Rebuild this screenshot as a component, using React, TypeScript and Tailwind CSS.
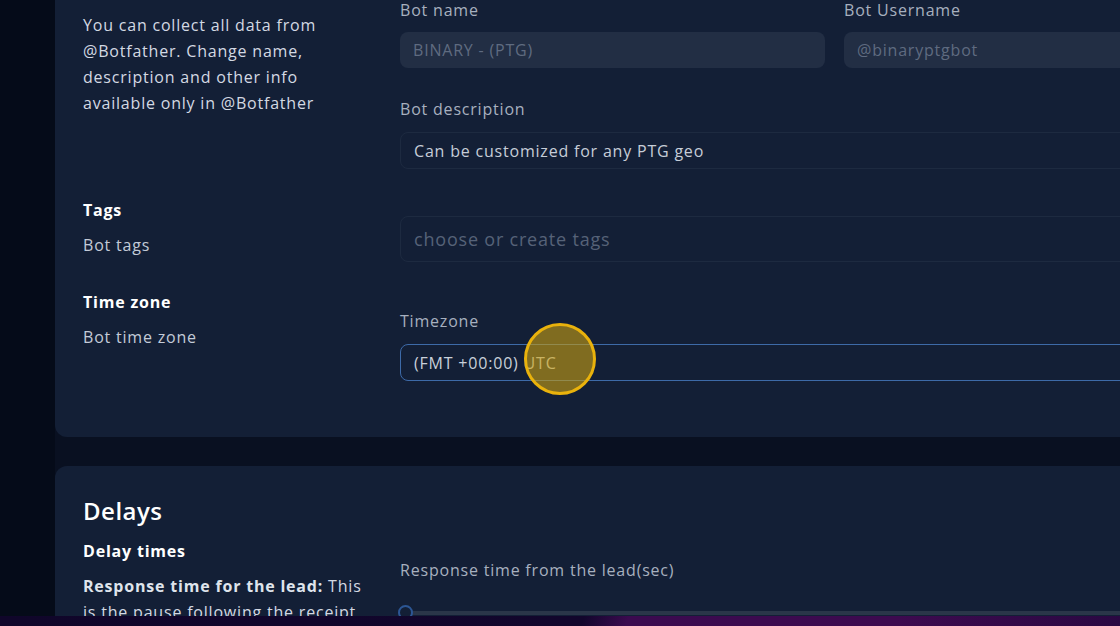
import React from 'react';

const font = { fontFamily: '"Open Sans", "Noto Sans", sans-serif' };

const Label: React.FC<{ children: React.ReactNode; className?: string }> = ({ children, className = '' }) => (
  <div className={`h-6 leading-6 text-[16px] text-[#a7b0bf] ${className}`}>{children}</div>
);

export default function App() {
  return (
    <div className="w-[1120px] h-[626px] overflow-hidden flex flex-col bg-[#091021] tracking-[0.05em]" style={font}>
      <div className="flex h-[616px] overflow-hidden">
        {/* sidebar edge */}
        <div className="w-[55px] shrink-0 bg-[#050b19]" />

        <div className="flex-1 min-w-0">
          <div className="w-[1250px]">
            {/* Bot info card */}
            <div className="-mt-[40px] pt-[38px] pb-[56px] pl-[28px] rounded-xl bg-[#131f36]">
              {/* Bot name / description */}
              <div className="flex">
                <div className="w-[317px] shrink-0 pt-[14px]">
                  <p className="w-[255px] text-[16px] leading-[26px] font-medium text-[#d3d9e3]">
                    You can collect all data from @Botfather. Change name, description and other info available only in @Botfather
                  </p>
                </div>
                <div className="flex-1">
                  <div className="flex gap-[19px]">
                    <div className="w-[425px]">
                      <Label>Bot name</Label>
                      <div className="mt-[10px] h-[36px] rounded-lg bg-[#222e44] flex items-center px-[13px] text-[16px] text-[#5f6b80]">
                        BINARY - (PTG)
                      </div>
                    </div>
                    <div className="w-[425px]">
                      <Label>Bot Username</Label>
                      <div className="mt-[10px] h-[36px] rounded-lg bg-[#222e44] flex items-center px-[13px] text-[16px] text-[#5f6b80]">
                        @binaryptgbot
                      </div>
                    </div>
                  </div>
                  <Label className="mt-[29px]">Bot description</Label>
                  <div className="mt-[11px] h-[37px] rounded-lg border border-[#1d2a40] flex items-center px-[13px] text-[16px] text-[#c6cdd8]">
                    Can be customized for any PTG geo
                  </div>
                </div>
              </div>

              {/* Tags */}
              <div className="flex mt-[29px]">
                <div className="w-[317px] shrink-0">
                  <div className="h-6 leading-6 text-[16px] font-bold text-white">Tags</div>
                  <div className="mt-[11px] h-6 leading-6 text-[16px] font-medium text-[#c3cbd8]">Bot tags</div>
                </div>
                <div className="flex-1 pt-[18px]">
                  <div className="h-[46px] rounded-lg border border-[#1d2a40] flex items-center px-[13px] text-[18px] text-[#566278]">
                    choose or create tags
                  </div>
                </div>
              </div>

              {/* Time zone */}
              <div className="flex mt-[28px]">
                <div className="w-[317px] shrink-0">
                  <div className="h-6 leading-6 text-[16px] font-bold text-white">Time zone</div>
                  <div className="mt-[11px] h-6 leading-6 text-[16px] font-medium text-[#c3cbd8]">Bot time zone</div>
                </div>
                <div className="flex-1 pt-[19px]">
                  <Label>Timezone</Label>
                  <div className="relative mt-[11px] h-[37px] rounded-lg border border-[#3d6aa8] flex items-center px-[13px] text-[16px] text-[#c9d0da]">
                    (FMT +00:00) UTC
                    {/* click highlight */}
                    <div className="absolute left-[123px] top-[-22px] w-[72px] h-[72px] rounded-full border-[3px] border-[#e9b20c] bg-[#c9a013]/60" />
                  </div>
                </div>
              </div>
            </div>

            {/* Delays card */}
            <div className="mt-[29px] pt-[29px] pl-[28px] rounded-xl bg-[#131f36] h-[200px]">
              <div className="flex">
                <div className="w-[317px] shrink-0 pr-6">
                  <h2 className="h-8 leading-8 text-[24px] font-semibold text-white tracking-[0.02em]">Delays</h2>
                  <div className="mt-[12px] h-6 leading-6 text-[16px] font-bold text-white">Delay times</div>
                  <p className="mt-[10px] text-[16px] leading-[26px] text-[#d3d9e3]">
                    <span className="font-bold text-[#dfe4ec]">Response time for the lead:</span> This is the pause following the receipt of a message from the lead
                  </p>
                </div>
                <div className="flex-1 pt-[63px]">
                  <Label>Response time from the lead(sec)</Label>
                  <div className="relative mt-[29px] h-[4px] bg-[#2a3649] rounded-full">
                    <div className="absolute left-[-2px] top-[-6px] w-[15px] h-[15px] rounded-full border-2 border-[#2c5694] bg-[#131f36]" />
                  </div>
                </div>
              </div>
            </div>
          </div>
        </div>
      </div>

      {/* taskbar strip */}
      <div className="h-[10px] shrink-0 bg-[linear-gradient(110deg,#10062a_0%,#12062c_52%,#3b0a4f_56%,#3d0a4f_80%,#2a0842_100%)]" />
    </div>
  );
}
